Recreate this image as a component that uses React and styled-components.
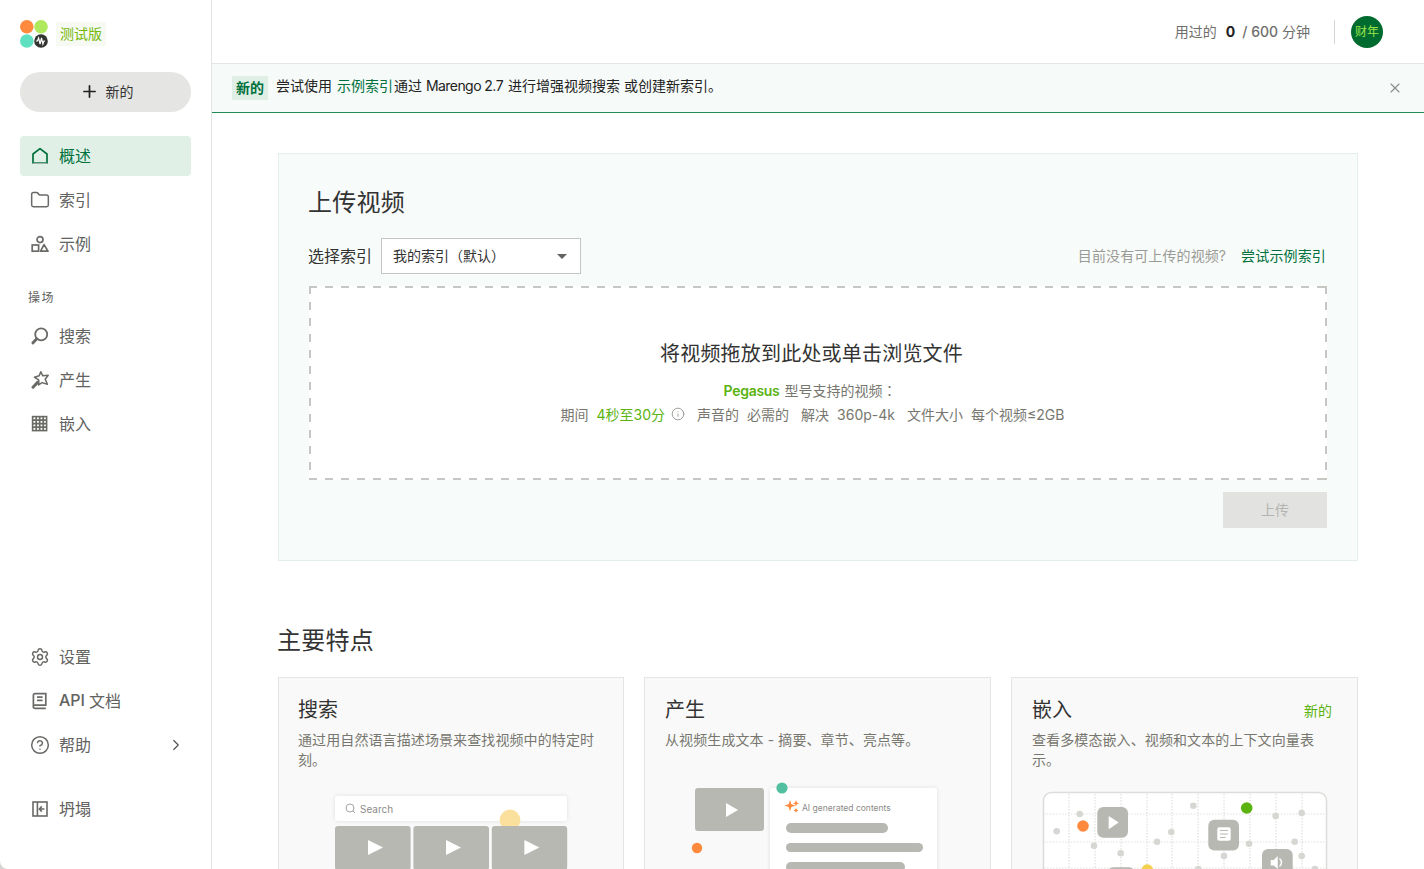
import React from 'react'
import styled, { createGlobalStyle } from 'styled-components'
import { Plus, Folder, Settings, CircleHelp, ChevronRight, X, Info } from 'lucide-react'

const GlobalStyle = createGlobalStyle`
  html, body {
    margin: 0;
    padding: 0;
    height: 100%;
    background: #d4d4d2;
    overflow: hidden;
  }
  body, button {
    font-family: "Inter", "Noto Sans CJK SC", "Liberation Sans", sans-serif;
  }
  * { box-sizing: border-box; }
`

function HomeIcon() {
  return (
    <svg width="18" height="18" viewBox="0 0 18 18" fill="none">
      <path d="M9 1.6 16 7v9H2V7z" stroke="#00703c" strokeWidth="1.7" strokeLinejoin="round" />
      <path d="M2 16.4h14" stroke="#9ab5a6" strokeWidth="1.2" />
    </svg>
  )
}

function ShapesIcon() {
  return (
    <svg width="18" height="18" viewBox="0 0 18 18" fill="none" stroke="#6a6a67" strokeWidth="1.7">
      <circle cx="9" cy="4.600" r="3" />
      <rect x="1.200" y="10" width="6.400" height="6.200" />
      <path d="M13 9.600 17 16.200H9.600z" strokeLinejoin="round" />
    </svg>
  )
}

function SearchIcon() {
  return (
    <svg width="18" height="18" viewBox="0 0 18 18" fill="none" stroke="#6a6a67">
      <circle cx="10.200" cy="7.400" r="6" strokeWidth="1.800" />
      <path d="M5.800 11.800 2 15.800" strokeWidth="3" strokeLinecap="round" />
    </svg>
  )
}

function WandIcon() {
  return (
    <svg width="18" height="18" viewBox="0 0 18 18" fill="none" stroke="#6a6a67">
      <path d="M9.800.8 11.800 4.800l5.400-.6-3 4 2.200 5-5.400-1.600-3.400 2.400.2-4.800L3.400 6.200l4.800-1.400z" strokeWidth="1.500" strokeLinejoin="round" />
      <path d="M6.600 11.400 2 16.200" strokeWidth="3" strokeLinecap="round" />
    </svg>
  )
}

function GridIcon() {
  return (
    <svg width="18" height="18" viewBox="0 0 18 18" fill="none" stroke="#6a6a67">
      <rect x="1.600" y="1.600" width="14" height="14" strokeWidth="1.600" />
      <path d="M1.600 5.200h14M1.600 8.700h14M1.600 12.200h14M5.200 1.600v14M8.700 1.600v14M12.200 1.600v14" strokeWidth="1.700" />
    </svg>
  )
}

function BookIcon() {
  return (
    <svg width="18" height="18" viewBox="0 0 18 18" fill="none" stroke="#6a6a67" strokeWidth="1.700">
      <path d="M2.400 14.400V3a1.400 1.400 0 0 1 1.400-1.400h11v11.600H3.800a1.400 1.400 0 0 0 0 3.200h11" />
      <path d="M6 5.200h5.600M6 8.400h5.600" />
    </svg>
  )
}

function CollapseIcon() {
  return (
    <svg width="18" height="18" viewBox="0 0 18 18" fill="none" stroke="#6a6a67" strokeWidth="1.600">
      <rect x="2" y="2" width="14" height="14" />
      <path d="M6.400 2v14M13.400 9H8.600M10.800 6.400 8.400 9l2.400 2.600" />
    </svg>
  )
}

function Logo() {
  return (
    <svg width="28" height="28" viewBox="0 0 28 28">
      <circle cx="6.800" cy="6.800" r="6.800" fill="#ff8a3d" />
      <circle cx="21" cy="6.800" r="6.800" fill="#aee85c" />
      <circle cx="6.800" cy="21" r="6.800" fill="#5fe0c0" />
      <circle cx="21" cy="21" r="6.800" fill="#33332f" />
      <path d="M15.800 21h1.600l1.200-3 1.500 6 1.400-6 1.400 6 1-3h1.200" fill="none" stroke="#fff" strokeWidth="1.200" />
    </svg>
  )
}

function SearchArt() {
  return (
    <Art viewBox="0 0 344 90">
      <defs>
        <filter id="soft" x="-10%" y="-30%" width="120%" height="160%">
          <feDropShadow dx="0" dy="0" stdDeviation="2" floodColor="#000" floodOpacity="0.1" />
        </filter>
      </defs>
      <rect x="56" y="16" width="232" height="25" rx="3" fill="#fff" filter="url(#soft)" />
      <circle cx="71" cy="28" r="4" fill="none" stroke="#a5a5a1" />
      <path d="M74 31l2 2" stroke="#a5a5a1" />
      <text x="81" y="32.500" fontSize="10" fill="#8c8c88">Search</text>
      <circle cx="231" cy="40" r="10.400" fill="#fbdf9c" />
      <rect x="56" y="46" width="75.600" height="44" rx="3" fill="#b7b8b2" />
      <rect x="134.400" y="46" width="75.600" height="44" rx="3" fill="#b7b8b2" />
      <rect x="212.800" y="46" width="75.400" height="44" rx="3" fill="#b7b8b2" />
      <path d="M89 60v15l15-7.500z" fill="#fff" />
      <path d="M167 60v15l15-7.500z" fill="#fff" />
      <path d="M245.400 60v15l15-7.500z" fill="#fff" />
    </Art>
  )
}

function GenerateArt() {
  return (
    <Art viewBox="0 0 344 90">
      <defs>
        <filter id="softb" x="-10%" y="-10%" width="120%" height="120%">
          <feDropShadow dx="0" dy="0" stdDeviation="2" floodColor="#000" floodOpacity="0.1" />
        </filter>
      </defs>
      <rect x="50" y="8" width="69" height="43" rx="3" fill="#b7b8b2" />
      <path d="M81 23v14l12-7z" fill="#fff" />
      <rect x="125" y="8" width="167" height="100" rx="3" fill="#fff" filter="url(#softb)" />
      <circle cx="137" cy="8" r="5.600" fill="#52c0a0" />
      <circle cx="52" cy="68" r="5.200" fill="#ff8a3d" />
      <path d="M145 20l1.400 4.200 4.200 1.400-4.200 1.400-1.400 4.200-1.400-4.200-4.200-1.400 4.200-1.400z" fill="#ff8a3d" />
      <path d="M151 20l.9 2.400 2.100.9-2.100.9-.9 2.400-.9-2.400-2.100-.9 2.100-.9z" fill="#ff8a3d" />
      <path d="M151 28l.8 1.600 1.600.8-1.600.8-.8 1.600-.8-1.600-1.600-.8 1.600-.8z" fill="#ff8a3d" />
      <text x="157" y="31" fontSize="8.500" fill="#8c8c88">AI generated contents</text>
      <rect x="141" y="43" width="102" height="10" rx="5" fill="#b7b8b2" />
      <rect x="141" y="63" width="137" height="9" rx="4.500" fill="#b7b8b2" />
      <rect x="141" y="82" width="119" height="10" rx="5" fill="#b7b8b2" />
    </Art>
  )
}

const gridX = [57, 83, 109, 135, 160, 186, 212, 238, 264, 290]
const greyDots = [
  [44.7, 51.3], [67.7, 34], [82, 65.7], [108.7, 73.3], [145, 61.7], [159.3, 52], [181.3, 25.7], [212, 76],
  [237, 63.7], [263.7, 36], [289.7, 33], [282.7, 61.7], [289.7, 76], [186.3, 89], [303, 89],
]

function EmbedArt() {
  return (
    <Art viewBox="0 0 344 90">
      <rect x="31.500" y="12.500" width="283" height="90" rx="8" fill="#fff" stroke="#dcdcd9" strokeWidth="1.500" />
      {gridX.map((x) => (
        <path key={x} d={`M${x} 14v76`} stroke="#d8d8d5" strokeDasharray="1.500 1.500" />
      ))}
      <path d="M32 34h282M32 62h282M32 88h282" stroke="#e0e0dd" strokeDasharray="1.500 1.500" />
      {greyDots.map(([x, y]) => (
        <circle key={`${x}-${y}`} cx={x} cy={y} r="3.300" fill="#d6d6d3" />
      ))}
      <circle cx="71" cy="46" r="5.800" fill="#ff8a3d" />
      <circle cx="234.700" cy="28" r="5.800" fill="#5ab30f" />
      <circle cx="135.300" cy="90" r="5.800" fill="#f3d04e" />
      <rect x="85.300" y="27" width="30.700" height="30.700" rx="6" fill="#b7b8b2" />
      <path d="M96.700 36v13.300l10-6.700z" fill="#fff" />
      <rect x="196.300" y="39.700" width="30.700" height="30.700" rx="6" fill="#b7b8b2" />
      <rect x="205.300" y="47.300" width="13.400" height="13.400" rx="2" fill="#fff" />
      <path d="M208 50.500h8M208 54h8M208 57.500h5.500" stroke="#b7b8b2" strokeWidth="1.100" />
      <rect x="250" y="69" width="30.700" height="30.700" rx="6" fill="#b7b8b2" />
      <path d="M258.700 80h3l4-4v13l-4-3.500h-3z" fill="#fff" />
      <path d="M267.500 78.500a5 5 0 0 1 0 8" fill="none" stroke="#fff" strokeWidth="1.500" />
      <rect x="95.300" y="87.300" width="27.700" height="16" rx="6" fill="#b7b8b2" />
    </Art>
  )
}

export default function App() {
  return (
    <>
      <GlobalStyle />
      <Page>
        <Sidebar>
          <Brand>
            <Logo />
            <BetaBadge>测试版</BetaBadge>
          </Brand>
          <NewButton>
            <Plus size={19} strokeWidth={2.2} color="#222" />
            新的
          </NewButton>
          <Nav>
            <NavItem $active><HomeIcon />概述</NavItem>
            <NavItem><IconSlot><Folder size={20} color="#6a6a67" strokeWidth={1.8} /></IconSlot>索引</NavItem>
            <NavItem><ShapesIcon />示例</NavItem>
          </Nav>
          <NavLabel>操场</NavLabel>
          <Nav>
            <NavItem><SearchIcon />搜索</NavItem>
            <NavItem><WandIcon />产生</NavItem>
            <NavItem><GridIcon />嵌入</NavItem>
          </Nav>
          <Spacer />
          <Nav>
            <NavItem><IconSlot><Settings size={20} color="#6a6a67" strokeWidth={1.8} /></IconSlot>设置</NavItem>
            <NavItem><BookIcon /><strong>API</strong> 文档</NavItem>
            <NavItem>
              <IconSlot><CircleHelp size={20} color="#6a6a67" strokeWidth={1.8} /></IconSlot>帮助
              <NavArrow><ChevronRight size={18} color="#555" strokeWidth={1.6} /></NavArrow>
            </NavItem>
          </Nav>
          <CollapseItem><CollapseIcon />坍塌</CollapseItem>
        </Sidebar>

        <Main>
          <TopBar>
            <Usage>用过的<b>0</b><Count>/ 600</Count> 分钟</Usage>
            <Divider />
            <Avatar>财年</Avatar>
          </TopBar>
          <Banner>
            <BannerTag>新的</BannerTag>
            <BannerText>
              尝试使用 <a>示例索引</a>通过 <Latin>Marengo 2.7</Latin> 进行增强视频搜索 或创建新索引。
            </BannerText>
            <CloseButton><X size={16} color="#8a8a87" strokeWidth={1.6} /></CloseButton>
          </Banner>

          <Content>
            <UploadPanel>
              <PanelTitle>上传视频</PanelTitle>
              <IndexRow>
                <IndexLabel>选择索引</IndexLabel>
                <IndexSelect>
                  我的索引（默认）
                  <Caret />
                </IndexSelect>
                <NoVideo>目前没有可上传的视频?</NoVideo>
                <TryLink>尝试示例索引</TryLink>
              </IndexRow>
              <DropZone>
                <DropTitle>将视频拖放到此处或单击浏览文件</DropTitle>
                <DropLine><em>Pegasus</em> 型号支持的视频<Colon>：</Colon></DropLine>
                <Specs>
                  <Spec>期间<em>4秒至30分</em><Info size={14} color="#8a8a87" strokeWidth={1.4} /></Spec>
                  <Spec>声音的<span>必需的</span></Spec>
                  <Spec>解决<span>360p-4k</span></Spec>
                  <Spec>文件大小<span>每个视频≤2GB</span></Spec>
                </Specs>
              </DropZone>
              <UploadRow>
                <UploadButton>上传</UploadButton>
              </UploadRow>
            </UploadPanel>

            <SectionTitle>主要特点</SectionTitle>
            <Cards>
              <Card>
                <CardHead>
                  <CardTitle>搜索</CardTitle>
                  <CardText>通过用自然语言描述场景来查找视频中的特定时刻。</CardText>
                </CardHead>
                <SearchArt />
              </Card>
              <Card>
                <CardHead>
                  <CardTitle>产生</CardTitle>
                  <CardText>从视频生成文本 - 摘要、章节、亮点等。</CardText>
                </CardHead>
                <GenerateArt />
              </Card>
              <Card>
                <CardHead>
                  <NewTag>新的</NewTag>
                  <CardTitle>嵌入</CardTitle>
                  <CardText>查看多模态嵌入、视频和文本的上下文向量表示。</CardText>
                </CardHead>
                <EmbedArt />
              </Card>
            </Cards>
          </Content>
        </Main>
      </Page>
    </>
  )
}

const Page = styled.div`
  display: flex;
  height: 100vh;
  overflow: hidden;
  background: #fff;
  border-bottom-left-radius: 8px;
`
const Sidebar = styled.aside`
  width: 212px;
  flex-shrink: 0;
  display: flex;
  flex-direction: column;
  padding: 20px 20px 40px;
  border-right: 1px solid #e5e5e3;
`
const Brand = styled.div`
  display: flex;
  align-items: center;
  gap: 8px;
  height: 28px;
`
const BetaBadge = styled.span`
  width: 50px;
  height: 24px;
  display: flex;
  align-items: center;
  justify-content: center;
  padding-bottom: 2px;
  background: #f7faf3;
  font-size: 14px;
  color: #74b80c;
`
const NewButton = styled.button`
  margin-top: 24px;
  height: 40px;
  border: 0;
  border-radius: 20px;
  background: #e5e5e4;
  display: flex;
  align-items: center;
  justify-content: center;
  gap: 7px;
  padding: 0 0 2px 2px;
  font-size: 14px;
  color: #333;
`
const Nav = styled.nav`
  display: flex;
  flex-direction: column;
  gap: 4px;
  &:first-of-type { margin-top: 24px; }
`
const NavItem = styled.div`
  height: 40px;
  display: flex;
  align-items: center;
  gap: 10px;
  padding: 0 0 2px 11px;
  border-radius: 4px;
  font-size: 16px;
  color: ${(p) => (p.$active ? '#00703c' : '#62625f')};
  background: ${(p) => (p.$active ? '#e1f0e7' : 'transparent')};
  svg { margin-top: 2px; }
  strong {
    font-weight: 500;
    margin-right: -6px;
  }
`
const IconSlot = styled.span`
  display: flex;
  margin: 0 -1px;
`
const NavArrow = styled.span`
  margin-left: auto;
  margin-right: 6px;
  display: flex;
`
const NavLabel = styled.div`
  margin-top: 25px;
  margin-bottom: 9px;
  padding-left: 8px;
  height: 18px;
  line-height: 18px;
  font-size: 12px;
  letter-spacing: 1.500px;
  color: #62625f;
`
const Spacer = styled.div`
  flex: 1;
`
const CollapseItem = styled(NavItem)`
  margin-top: 24px;
`
const Main = styled.main`
  flex: 1;
  min-width: 0;
  display: flex;
  flex-direction: column;
`
const TopBar = styled.header`
  height: 64px;
  flex-shrink: 0;
  display: flex;
  align-items: center;
  justify-content: flex-end;
  padding-right: 41px;
  border-bottom: 1px solid #e5e5e3;
`
const Usage = styled.div`
  padding-bottom: 2px;
  font-size: 14px;
  color: #6e6e6b;
  b {
    margin: 0 7px 0 9px;
    font-weight: 700;
    color: #222;
  }
`
const Count = styled.span`
  font-weight: 500;
`
const Divider = styled.div`
  width: 1px;
  height: 24px;
  margin: 0 16px 0 24px;
  background: #d4d4d2;
`
const Avatar = styled.div`
  width: 32px;
  height: 32px;
  border-radius: 50%;
  padding-bottom: 2px;
  background: #006b2e;
  color: #9be34a;
  font-size: 12px;
  display: flex;
  align-items: center;
  justify-content: center;
`
const Banner = styled.div`
  height: 49px;
  flex-shrink: 0;
  display: flex;
  align-items: center;
  padding: 0 21px 0 20px;
  background: #f6faf8;
  border-bottom: 1px solid #1f8a55;
`
const BannerTag = styled.span`
  width: 36px;
  height: 24px;
  display: flex;
  align-items: center;
  justify-content: center;
  padding-bottom: 2px;
  background: #e0efe6;
  color: #00703c;
  font-size: 14px;
  font-weight: 700;
`
const BannerText = styled.div`
  margin: 0 0 7px 8px;
  font-size: 14px;
  color: #222;
  a {
    color: #00703c;
    margin: 0 1px 0 1px;
  }
`
const Latin = styled.span`
  letter-spacing: -0.550px;
  margin-right: 1px;
`
const CloseButton = styled.span`
  margin-left: auto;
  display: flex;
`
const Content = styled.div`
  padding: 40px 66px 0;
`
const UploadPanel = styled.section`
  height: 408px;
  padding: 30px;
  background: #f7fbf9;
  border: 1px solid #e4efea;
`
const PanelTitle = styled.h2`
  margin: 1px 0 -1px -1px;
  height: 36px;
  line-height: 36px;
  font-size: 24px;
  font-weight: 400;
  letter-spacing: 0.250px;
  color: #333;
`
const IndexRow = styled.div`
  margin-top: 18px;
  height: 36px;
  display: flex;
  align-items: center;
`
const IndexLabel = styled.span`
  font-size: 16px;
  color: #333;
  margin: 0 9px 0 -1px;
  padding-bottom: 2px;
`
const IndexSelect = styled.div`
  position: relative;
  width: 200px;
  height: 36px;
  display: flex;
  align-items: center;
  padding: 0 0 2px 11px;
  background: #fff;
  border: 1px solid #c4c4c0;
  font-size: 14px;
  color: #333;
`
const Caret = styled.span`
  position: absolute;
  right: 13px;
  top: 15px;
  border-left: 5px solid transparent;
  border-right: 5px solid transparent;
  border-top: 5px solid #62625f;
`
const NoVideo = styled.span`
  margin-left: auto;
  padding-bottom: 2px;
  font-size: 14px;
  letter-spacing: 0.100px;
  color: #9a9a96;
`
const TryLink = styled.span`
  margin: 0 1px 0 15px;
  padding-bottom: 2px;
  font-size: 14px;
  letter-spacing: 0.150px;
  color: #00703c;
`
const DropZone = styled.div`
  margin-top: 12px;
  height: 194px;
  display: flex;
  flex-direction: column;
  align-items: center;
  padding: 53px 13px 0 0;
  background-color: #fff;
  background-image:
    linear-gradient(to right, #c6c6c2 50%, transparent 50%),
    linear-gradient(to right, #c6c6c2 50%, transparent 50%),
    linear-gradient(to bottom, #c6c6c2 50%, transparent 50%),
    linear-gradient(to bottom, #c6c6c2 50%, transparent 50%);
  background-size: 16px 2px, 16px 2px, 2px 16px, 2px 16px;
  background-position: left top, left bottom, left top, right top;
  background-repeat: repeat-x, repeat-x, repeat-y, repeat-y;
`
const DropTitle = styled.div`
  height: 30px;
  line-height: 30px;
  font-size: 20px;
  letter-spacing: 0.200px;
  color: #333;
`
const DropLine = styled.div`
  margin-top: 9px;
  padding-right: 3px;
  height: 24px;
  line-height: 24px;
  font-size: 14px;
  color: #77776f;
  em {
    font-style: normal;
    font-weight: 600;
    letter-spacing: -0.300px;
    color: #5ab30f;
    margin-right: 1px;
  }
`
const Colon = styled.span`
  font-family: "Noto Sans CJK TC", sans-serif;
`
const Specs = styled.div`
  height: 24px;
  padding-left: 2px;
  display: flex;
  align-items: center;
  gap: 12px;
`
const Spec = styled.div`
  display: flex;
  align-items: center;
  gap: 8px;
  font-size: 14px;
  color: #77776f;
  em {
    font-style: normal;
    color: #5ab30f;
    margin-right: -2px;
  }
`
const UploadRow = styled.div`
  margin-top: 12px;
  display: flex;
  justify-content: flex-end;
`
const UploadButton = styled.button`
  width: 104px;
  height: 36px;
  border: 0;
  padding: 0 0 2px;
  background: #e2e2e0;
  font-size: 14px;
  color: #b4b4b0;
`
const SectionTitle = styled.h2`
  margin: 62px 0 0 -1px;
  height: 36px;
  line-height: 36px;
  font-size: 24px;
  font-weight: 400;
  letter-spacing: 0.250px;
  color: #333;
`
const Cards = styled.div`
  margin-top: 18px;
  display: grid;
  grid-template-columns: 346px 347px 347px;
  gap: 20px;
`
const CardHead = styled.div`
  position: relative;
  height: 102px;
  padding: 18px 20px 0;
`
const Card = styled.article`
  height: 260px;
  background: #f9f9f9;
  border: 1px solid #e5e5e3;
  &:first-child ${CardHead} {
    padding-left: 19px;
  }
`
const CardTitle = styled.h3`
  margin: 0;
  height: 28px;
  line-height: 28px;
  font-size: 20px;
  font-weight: 400;
  color: #333;
`
const CardText = styled.p`
  margin: 6px 0 0;
  font-size: 14px;
  line-height: 20px;
  letter-spacing: 0.100px;
  color: #77776f;
`
const NewTag = styled.span`
  position: absolute;
  right: 25px;
  top: 22px;
  font-size: 14px;
  color: #5ab30f;
`
const Art = styled.svg`
  display: block;
  width: 344px;
  height: 90px;
  overflow: visible;
  font-family: "Inter", "Liberation Sans", sans-serif;
`
